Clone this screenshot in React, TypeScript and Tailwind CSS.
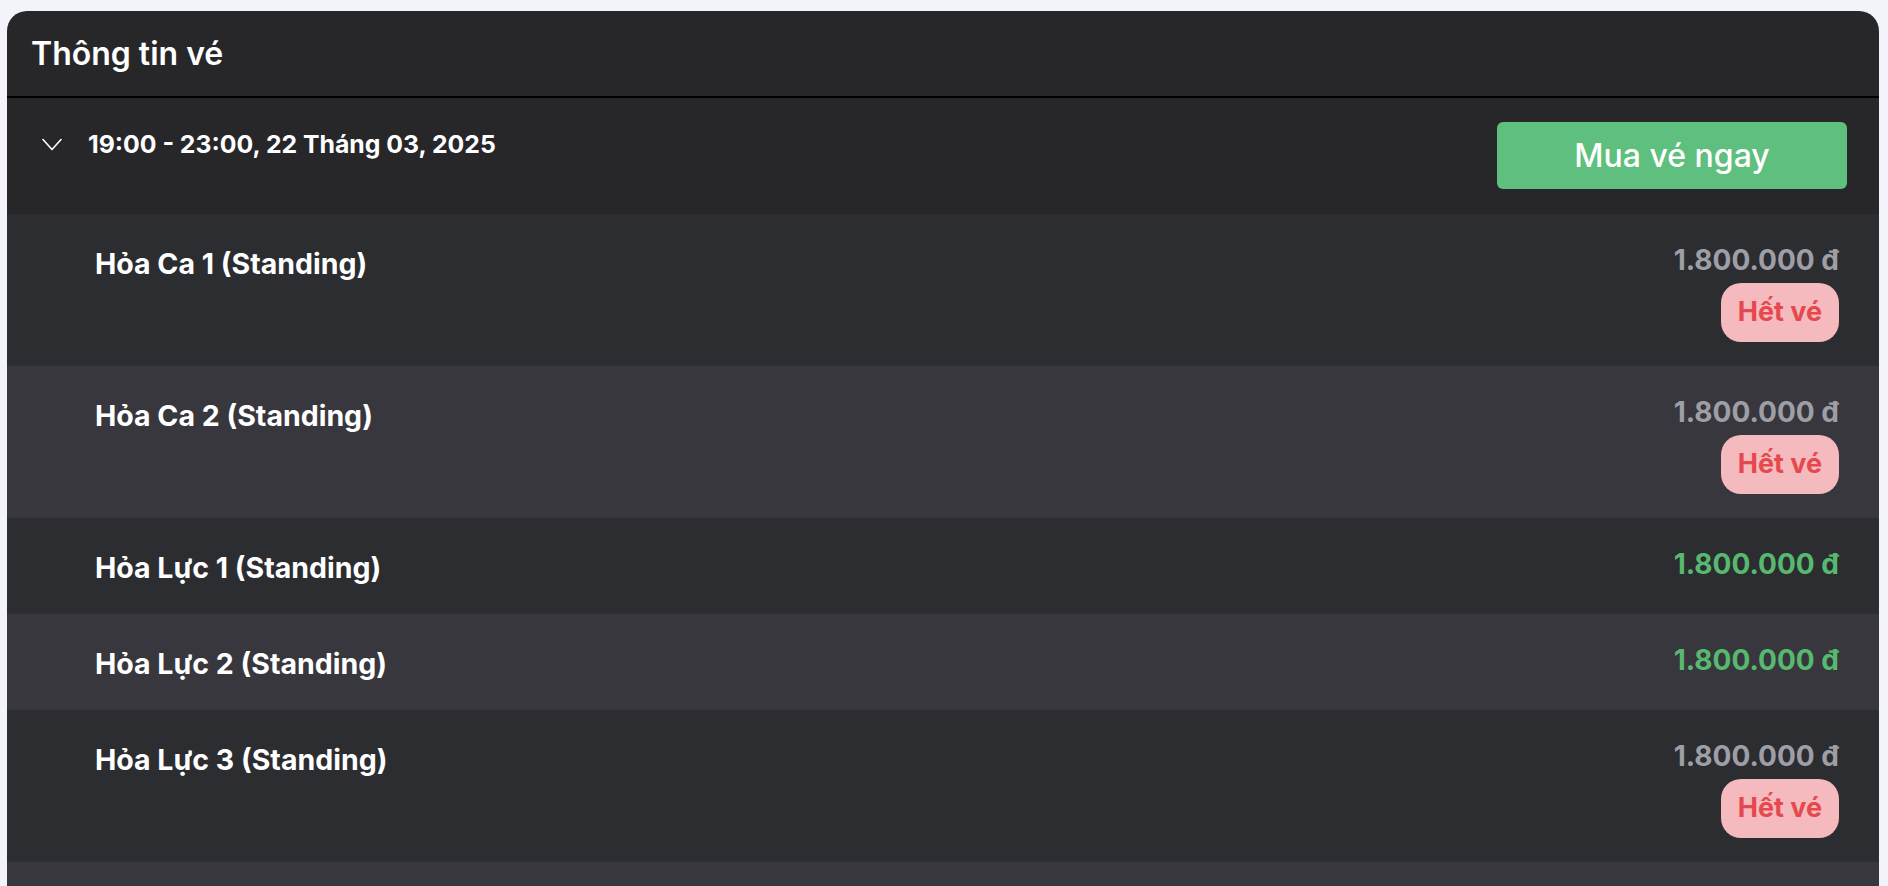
const tickets = [
  { name: "Hỏa Ca 1 (Standing)", price: "1.800.000 đ", soldOut: true },
  { name: "Hỏa Ca 2 (Standing)", price: "1.800.000 đ", soldOut: true },
  { name: "Hỏa Lực 1 (Standing)", price: "1.800.000 đ", soldOut: false },
  { name: "Hỏa Lực 2 (Standing)", price: "1.800.000 đ", soldOut: false },
  { name: "Hỏa Lực 3 (Standing)", price: "1.800.000 đ", soldOut: true },
  { name: "Hỏa Lực 4 (Standing)", price: "1.800.000 đ", soldOut: true },
]

function TicketRow({ name, price, soldOut, index }: { name: string; price: string; soldOut: boolean; index: number }) {
  return (
    <div
      className={`flex justify-between items-start pl-[88px] pr-10 pt-[27px] ${soldOut ? "pb-6" : "pb-[30px]"} ${
        index % 2 === 0 ? "bg-[#2c2d31]" : "bg-[#38373d]"
      }`}
    >
      <div className="mt-[7px] text-[28.5px] leading-[32px] font-bold text-white">{name}</div>
      <div className="flex flex-col items-end">
        <div className={`text-[28px] leading-[39px] font-bold ${soldOut ? "text-[#9d9ea6]" : "text-[#57b96f]"}`}>{price}</div>
        {soldOut && (
          <div className="mt-[3px] w-[118px] h-[59px] flex items-center justify-center rounded-[20px] bg-[#f4babd] text-[27px] font-bold text-[#e5484d]">
            Hết vé
          </div>
        )}
      </div>
    </div>
  )
}

export default function App() {
  return (
    <div className="h-screen overflow-hidden bg-[#f3f4fa] pl-[7px] pr-[9px] pt-[11px] font-['Inter',sans-serif]">
      {/* Card */}
      <div className="bg-[#27272a] rounded-t-[20px] overflow-hidden">
        {/* Header */}
        <div className="h-[87px] flex items-center px-6 border-b-2 border-black">
          <h2 className="text-[32px] leading-[40px] font-semibold text-white">Thông tin vé</h2>
        </div>
        {/* Showtime */}
        <div className="flex justify-between items-start pl-[35px] pr-8 pt-6 pb-[25px]">
          <div className="flex items-center gap-[26px] mt-1">
            <svg width="20" height="13" viewBox="0 0 20 13" fill="none" className="text-white">
              <path d="M1 1.5L10 11.5L19 1.5" stroke="currentColor" strokeWidth="1.6" strokeLinecap="round" strokeLinejoin="round" />
            </svg>
            <span className="text-[24.8px] leading-[36px] font-bold text-white">19:00 - 23:00, 22 Tháng 03, 2025</span>
          </div>
          <button className="w-[350px] h-[67px] rounded-md bg-[#5fbf7e] text-white text-[32px] font-medium">
            Mua vé ngay
          </button>
        </div>
        {/* Ticket list */}
        {tickets.map((t, i) => (
          <TicketRow key={t.name} index={i} {...t} />
        ))}
      </div>
    </div>
  )
}
